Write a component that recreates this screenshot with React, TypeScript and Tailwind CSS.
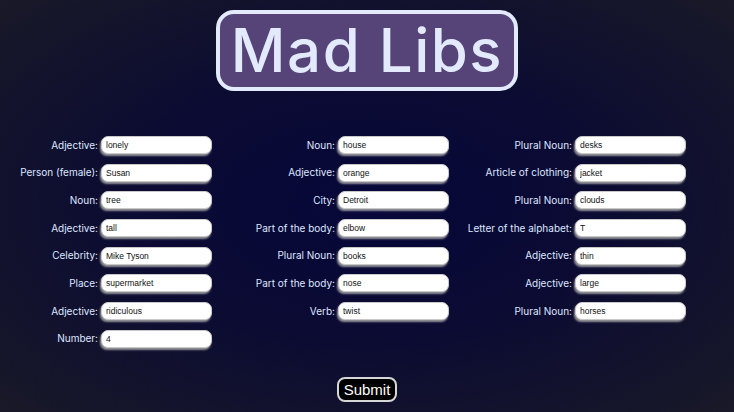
import { useState } from "react";

const columns: { label: string; value: string }[][] = [
  [
    { label: "Adjective:", value: "lonely" },
    { label: "Person (female):", value: "Susan" },
    { label: "Noun:", value: "tree" },
    { label: "Adjective:", value: "tall" },
    { label: "Celebrity:", value: "Mike Tyson" },
    { label: "Place:", value: "supermarket" },
    { label: "Adjective:", value: "ridiculous" },
    { label: "Number:", value: "4" },
  ],
  [
    { label: "Noun:", value: "house" },
    { label: "Adjective:", value: "orange" },
    { label: "City:", value: "Detroit" },
    { label: "Part of the body:", value: "elbow" },
    { label: "Plural Noun:", value: "books" },
    { label: "Part of the body:", value: "nose" },
    { label: "Verb:", value: "twist" },
  ],
  [
    { label: "Plural Noun:", value: "desks" },
    { label: "Article of clothing:", value: "jacket" },
    { label: "Plural Noun:", value: "clouds" },
    { label: "Letter of the alphabet:", value: "T" },
    { label: "Adjective:", value: "thin" },
    { label: "Adjective:", value: "large" },
    { label: "Plural Noun:", value: "horses" },
  ],
];

const colGrid = [
  "grid-cols-[98px_111px]",
  "ml-[3px] grid-cols-[120px_111px]",
  "ml-[3px] grid-cols-[120px_111px]",
];

export default function App() {
  const [values, setValues] = useState(columns.map((c) => c.map((f) => f.value)));

  const update = (ci: number, fi: number, v: string) => {
    setValues((prev) => prev.map((c, i) => (i === ci ? c.map((x, j) => (j === fi ? v : x)) : c)));
  };

  return (
    <div className="min-h-screen w-full bg-[radial-gradient(ellipse_at_center,#07073a_0%,#0b0b33_45%,#191928_100%)] font-['Inter',sans-serif] flex flex-col items-center">
      <div className="mt-[10px] w-[302px] h-[81px] rounded-[18px] border-[4px] border-[#e3eafc] bg-[#564478] flex items-center justify-center">
        <h1 className="text-[60px] leading-none font-medium text-[#e3eafc] tracking-[1.5px] pb-[2px]">Mad Libs</h1>
      </div>

      <div className="mt-[45px] w-full flex items-start">
        {columns.map((col, ci) => (
          <div key={ci} className={`grid ${colGrid[ci]} gap-x-[3px] gap-y-[9.7px] items-center`}>
            {col.map((f, fi) => (
              <div key={fi} className="contents">
                <label className="flex justify-end whitespace-nowrap text-[10px] text-[#dfe7ff]">{f.label}</label>
                <input
                  value={values[ci][fi]}
                  onChange={(e) => update(ci, fi, e.target.value)}
                  className="h-[18px] w-[111px] rounded-[7px] bg-white border border-[#c8c8c8] pl-[4px] text-[8.5px] text-[#111] font-['Liberation_Sans',Arial,sans-serif] shadow-[-1px_2px_2px_rgba(170,170,170,0.85)] outline-none"
                />
              </div>
            ))}
          </div>
        ))}
      </div>

      <button className="mt-auto mb-[10px] h-[25px] px-[5px] rounded-[8px] bg-black border-[2px] border-[#d6d6d6] text-white text-[15px] leading-none font-['Liberation_Sans',Arial,sans-serif]">
        Submit
      </button>
    </div>
  );
}
